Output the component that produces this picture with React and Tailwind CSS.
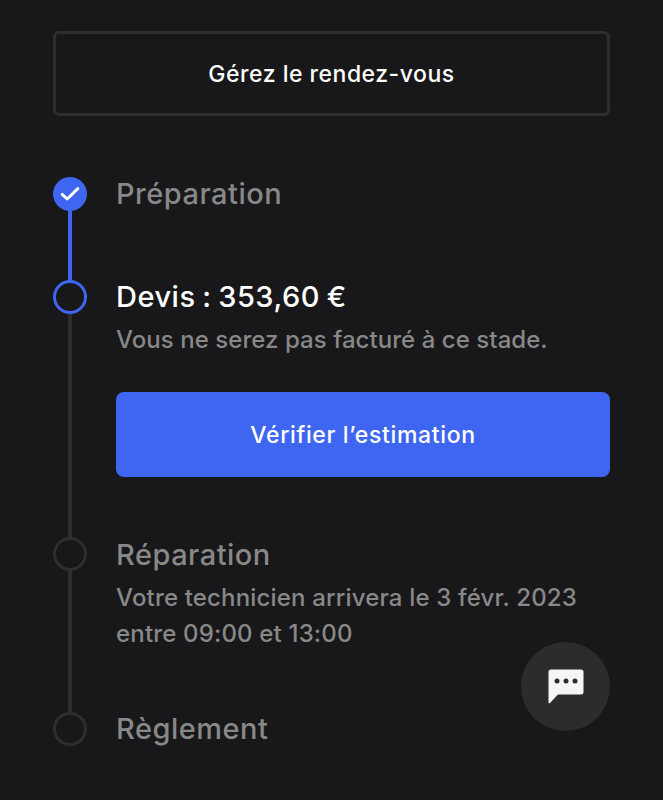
import React from 'react';

const font = "font-['Inter',sans-serif] [font-feature-settings:'calt'_0]";
const heading = 'text-[29px] leading-[34px] font-medium tracking-[0.5px]';

const Step = ({ state, line, height, children }) => {
  return (
    <div className={`flex gap-[29px] ${height}`}>
      <div className="flex w-[34px] shrink-0 flex-col items-center">
        {state === 'done' && (
          <div className="flex h-[34px] w-[34px] shrink-0 items-center justify-center rounded-full bg-[#3f66f0]">
            <svg width="20" height="16" viewBox="0 0 20 16" fill="none">
              <path d="M2.2 8.4L7.2 13L17.8 2.6" stroke="white" strokeWidth="3" strokeLinecap="round" strokeLinejoin="round" />
            </svg>
          </div>
        )}
        {state === 'current' && (
          <div className="h-[34px] w-[34px] shrink-0 rounded-full border-[3px] border-[#3f66f0]" />
        )}
        {state === 'todo' && (
          <div className="h-[34px] w-[34px] shrink-0 rounded-full border-[3px] border-[#2e2e30]" />
        )}
        {line && <div className={`w-[4px] flex-1 ${line}`} />}
      </div>
      <div className="min-w-0 flex-1">{children}</div>
    </div>
  );
};

const App = () => {
  return (
    <div className={`relative h-[800px] w-[663px] overflow-hidden bg-[#18181a] px-[53px] pt-[31px] ${font}`}>
      <button className="flex h-[85px] w-full items-center justify-center rounded-[6px] border-[3px] border-[#2e2e30] pt-[2px] text-[23px] font-medium tracking-[0.5px] text-white">
        Gérez le rendez-vous
      </button>

      <div className="mt-[61px]">
        <Step state="done" line="bg-[#3f66f0]" height="h-[103px]">
          <h3 className={`${heading} text-[#888888]`}>Préparation</h3>
        </Step>
        <Step state="current" line="bg-[#2e2e30]" height="h-[257px]">
          <h3 className={`${heading} [word-spacing:-1.5px] text-white`}>Devis : 353,60 €</h3>
          <p className="mt-[8px] text-[24px] leading-[36px] font-medium tracking-[0.05px] text-[#888888]">
            Vous ne serez pas facturé à ce stade.
          </p>
          <button className="mt-[34px] flex h-[85px] w-full items-center justify-center rounded-[8px] bg-[#3f66f0] pt-[2px] text-[23px] font-medium tracking-[0.65px] text-white">
            Vérifier l’estimation
          </button>
        </Step>
        <Step state="todo" line="bg-[#2e2e30]" height="h-[175px]">
          <h3 className={`${heading} pt-[1px] text-[#888888]`}>Réparation</h3>
          <p className="mt-[8px] text-[24px] leading-[36px] font-medium tracking-[0.17px] text-[#888888]">
            Votre technicien arrivera le 3 févr. 2023
            <br />
            entre 09:00 et 13:00
          </p>
        </Step>
        <Step state="todo" height="h-[34px]">
          <h3 className={`${heading} text-[#888888]`}>Règlement</h3>
        </Step>
      </div>

      <button className="absolute top-[642px] left-[521px] flex h-[89px] w-[89px] items-center justify-center rounded-full bg-[#2c2c2c]">
        <svg width="36" height="35" viewBox="0 0 36 35" fill="none">
          <path
            fill="#f5f5f5"
            d="M3 0.5H33A2.5 2.5 0 0 1 35.5 3V23A2.5 2.5 0 0 1 33 25.5H10L2 34C1.3 34.6 0.5 34.2 0.5 33.4V3A2.5 2.5 0 0 1 3 0.5Z"
          />
          <circle cx="9" cy="12" r="2.5" fill="#2c2c2c" />
          <circle cx="18" cy="12" r="2.5" fill="#2c2c2c" />
          <circle cx="27" cy="12" r="2.5" fill="#2c2c2c" />
        </svg>
      </button>
    </div>
  );
};

export default App;
